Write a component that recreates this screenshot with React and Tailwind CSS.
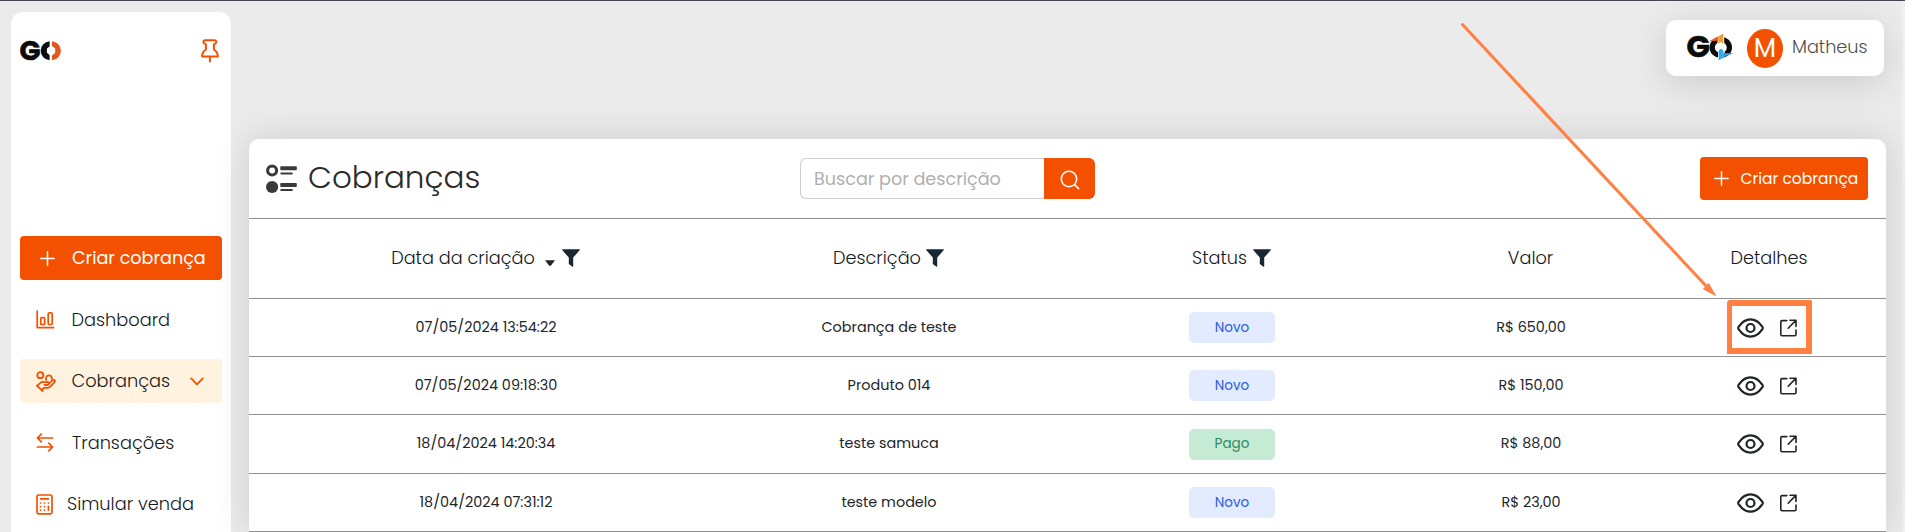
import React from "react";

const SANS = "font-['Poppins','Inter',sans-serif]";

function LogoSmall() {
  return (
    <svg width="42" height="22" viewBox="0 0 42 22" className="block overflow-visible">
      <text x="-0.6" y="19.6" fontFamily="Poppins, Inter, sans-serif" fontWeight="700" fontSize="26.5" textLength="21" lengthAdjust="spacingAndGlyphs" fill="#0b0b0b" stroke="#0b0b0b" strokeWidth="0.6">G</text>
      <path d="M29.6 1.2 A9.9 9.6 0 0 0 29.6 20.3 V15 L26.9 12.8 V8.6 L29.6 6.4 Z" fill="#0b0b0b" />
      <path d="M32 1.2 A9.9 9.6 0 0 1 32 20.3 V15.6 L35.2 12.8 V8.6 L32 5.9 Z" fill="#e4571b" />
    </svg>
  );
}

function LogoLarge() {
  return (
    <svg width="48" height="30" viewBox="0 0 48 30" className="block overflow-visible">
      <text x="-0.4" y="24.4" fontFamily="Poppins, Inter, sans-serif" fontWeight="700" fontSize="29" textLength="23.4" lengthAdjust="spacingAndGlyphs" fill="#0b0b0b" stroke="#0b0b0b" strokeWidth="0.6">G</text>
      <ellipse cx="33.8" cy="14.4" rx="8.6" ry="8" fill="none" stroke="#0b0b0b" strokeWidth="5.2" />
      <path d="M30.5 3 H37.2 V14 L33.8 11.5 L30.5 14 Z" fill="#fff" />
      <path d="M31 27 V17 L34 14.6 L37.6 17.5 V23 Z" fill="#fff" />
      <path d="M21.4 8.6 L31.4 3.2 V7.4 Z" fill="#f0592a" />
      <path d="M31.4 3.4 L36.2 0.6 V10.8 L34 9 L31.4 10.8 Z" fill="#f59a2c" />
      <path d="M31.6 27.6 V17.6 L33.8 15.8 L36.4 17.6 V24.6 Z" fill="#37a9e6" />
      <path d="M36.4 24.6 V20 H46.4 Z" fill="#2d95cf" />
    </svg>
  );
}

function PinIcon() {
  return (
    <svg width="18" height="24" viewBox="0 0 18 24" fill="none" stroke="#f35000" strokeWidth="2" strokeLinecap="round" strokeLinejoin="round" className="block">
      <path d="M4.2 1.2 H13.4 Q15.4 1.3 15.3 3 Q15.2 4.5 12.9 5.4 V10.6 Q16.8 12.9 16.8 17.4 H1.1 Q1.1 12.9 4.9 10.6 V5.4 Q2.5 4.5 2.4 3 Q2.4 1.3 4.2 1.2 Z M8.9 17.5 V22.6" />
    </svg>
  );
}

function Plus() {
  return (
    <svg width="15" height="15" viewBox="0 0 15 15" stroke="#fff" strokeWidth="1.5" strokeLinecap="round" className="block shrink-0">
      <path d="M7.5 0.8 V14.2 M0.8 7.5 H14.2" />
    </svg>
  );
}

function DashboardIcon() {
  return (
    <svg width="19" height="19" viewBox="0 0 19 19" fill="none" stroke="#f35000" strokeWidth="1.7" strokeLinecap="round" strokeLinejoin="round" className="block">
      <path d="M1.2 1 V17.7 H17.6" />
      <rect x="4.7" y="7.7" width="4" height="6.8" rx="1" />
      <rect x="12.2" y="2.9" width="4" height="11.6" rx="1" />
    </svg>
  );
}

function ChargesIcon() {
  return (
    <svg width="20" height="21" viewBox="0 0 20 21" fill="none" stroke="#f35000" strokeWidth="1.8" strokeLinecap="round" strokeLinejoin="round" className="block">
      <circle cx="4.3" cy="4.2" r="3" />
      <path d="M10.4 9 A3 3 0 1 1 15.8 8.2" />
      <path d="M1 14.8 L4.4 11.8 Q6.3 10.2 8.6 11.2 L12 11.2 Q13.4 11.8 12.6 13.4 Q12.2 14 11.2 14 H8.6" />
      <path d="M13 12.4 L16.5 9.4 Q18.2 8.4 18.9 9.6 Q19.2 10.4 18.3 11.4 L14.4 15.6 Q13.2 16.8 11.6 16.8 H8 L6.2 18.6" />
      <path d="M1 14.6 L6.5 20" />
    </svg>
  );
}

function TransfersIcon() {
  return (
    <svg width="18" height="19" viewBox="0 0 18 19" fill="none" stroke="#f35000" strokeWidth="1.7" strokeLinecap="round" strokeLinejoin="round" className="block">
      <path d="M16.6 5 H1.4 M5.3 1.2 L1.4 5 L5.3 8.8" />
      <path d="M1.4 14 H16.6 M12.7 10.2 L16.6 14 L12.7 17.8" />
    </svg>
  );
}

function CalculatorIcon() {
  return (
    <svg width="17" height="21" viewBox="0 0 17 21" fill="none" stroke="#f35000" strokeWidth="1.7" strokeLinecap="round" strokeLinejoin="round" className="block">
      <rect x="1" y="1" width="15" height="18.8" rx="1.6" />
      <path d="M4.6 4.9 H12.4" />
      <path d="M4.5 9 H4.6 M8.4 9 H8.5 M12.4 9 H12.5 M4.5 12.6 H4.6 M8.4 12.6 H8.5 M4.5 16.1 H4.6 M8.4 16.1 H8.5 M12.4 12.4 V16.1" />
    </svg>
  );
}

function Chevron() {
  return (
    <svg width="14" height="9" viewBox="0 0 14 9" fill="none" stroke="#f35000" strokeWidth="1.8" strokeLinecap="round" strokeLinejoin="round" className="block">
      <path d="M1.2 1.4 L7 7.4 L12.8 1.4" />
    </svg>
  );
}

function ListIcon() {
  return (
    <svg width="31" height="30" viewBox="0 0 31 30" fill="#3a3a3a" className="mt-px block shrink-0">
      <circle cx="6.1" cy="6.5" r="4.5" fill="none" stroke="#3a3a3a" strokeWidth="3.1" />
      <circle cx="6.1" cy="23" r="6.1" />
      <rect x="14.3" y="2.3" width="16.5" height="4" rx="0.8" />
      <rect x="14.3" y="8.4" width="12.5" height="2" rx="0.8" />
      <rect x="14.3" y="19" width="16.5" height="4" rx="0.8" />
      <rect x="14.3" y="25" width="12.5" height="2" rx="0.8" />
    </svg>
  );
}

function SearchIcon() {
  return (
    <svg width="20" height="20" viewBox="0 0 20 20" fill="none" stroke="#fff" strokeWidth="1.6" strokeLinecap="round" className="mt-0.5 block">
      <circle cx="9" cy="9" r="7.7" />
      <path d="M14.6 14.6 L18.6 18.6" />
    </svg>
  );
}

function Funnel() {
  return (
    <svg width="18" height="18" viewBox="0 0 18 18" fill="#172733" className="mt-px block shrink-0">
      <path d="M0.2 0.2 H17.8 V1 L11.2 8.6 V17.8 H10.4 L6.8 15 V8.6 L0.2 1 Z" />
    </svg>
  );
}

function Caret() {
  return (
    <svg width="10" height="6" viewBox="0 0 10 6" fill="#212529" className="mt-[10px] block shrink-0">
      <path d="M0 0.3 H10 L6.2 5.2 Q5 6.2 3.8 5.2 Z" />
    </svg>
  );
}

function Eye() {
  return (
    <svg width="27" height="20" viewBox="0 0 27 20" fill="none" stroke="#212529" strokeWidth="2.2" strokeLinejoin="round" className="block">
      <path d="M1.2 10 Q1.2 9.2 2 8.3 C4.8 4.2 8.8 1.3 13.5 1.3 C18.2 1.3 22.2 4.2 25 8.3 Q25.8 9.2 25.8 10 Q25.8 10.8 25 11.7 C22.2 15.8 18.2 18.7 13.5 18.7 C8.8 18.7 4.8 15.8 2 11.7 Q1.2 10.8 1.2 10 Z" />
      <circle cx="13.5" cy="10" r="4" />
    </svg>
  );
}

function OpenIcon() {
  return (
    <svg width="17" height="18" viewBox="0 0 17 18" fill="none" stroke="#212529" strokeWidth="1.6" strokeLinecap="round" strokeLinejoin="round" className="block">
      <path d="M6.8 1.6 H2 Q0.8 1.6 0.8 2.8 V15.6 Q0.8 16.8 2 16.8 H14.8 Q16 16.8 16 15.6 V11" />
      <path d="M10 1.2 H16 V7.4 M15.8 1.4 L8.2 9.2" />
    </svg>
  );
}

function NavItem({ icon, label, active, slot }) {
  return (
    <div className={`flex h-11 items-center rounded ${active ? "bg-[#fff2df]" : ""}`}>
      <div className={`flex shrink-0 items-center pl-4 ${slot}`}>{icon}</div>
      <span className="whitespace-nowrap pt-px text-[17.75px] font-light text-[#15191d]">{label}</span>
      {active && <span className="ml-auto mr-[18px]"><Chevron /></span>}
    </div>
  );
}

function Sidebar() {
  return (
    <aside className="ml-[11px] mt-[11px] flex w-[220px] shrink-0 flex-col overflow-hidden rounded-t-xl bg-white px-[9px]">
      <div className="flex h-[223px] shrink-0 items-start justify-between pr-[3px] pt-[27px]">
        <div className="mt-[1px]"><LogoSmall /></div>
        <PinIcon />
      </div>
      <button className="mt-px flex h-11 w-[202px] shrink-0 items-center rounded bg-[#f35000] pl-[19.5px] text-white">
        <Plus />
        <span className="ml-[17.5px] whitespace-nowrap text-[17.6px]">Criar cobrança</span>
      </button>
      <nav className="mt-[17.5px] flex w-[202px] shrink-0 flex-col gap-[17.6px]">
        <NavItem icon={<DashboardIcon />} label="Dashboard" slot="w-[51.5px]" />
        <NavItem icon={<ChargesIcon />} label="Cobranças" slot="w-[51.5px]" active />
        <NavItem icon={<TransfersIcon />} label="Transações" slot="w-[52px]" />
        <NavItem icon={<CalculatorIcon />} label="Simular venda" slot="w-[47px]" />
      </nav>
    </aside>
  );
}

function ProfileCard() {
  return (
    <div className="mr-[18px] mt-[19px] flex h-14 w-[218px] items-center self-end rounded-[10px] bg-white pl-[21px] shadow-[0_8px_36px_rgba(0,0,0,0.13)]">
      <LogoLarge />
      <div className="ml-3 flex h-[39px] w-9 items-center justify-center rounded-[50%] bg-[#f35000] text-[26px] text-white">M</div>
      <span className="-mt-0.5 ml-[9px] text-[17.7px] font-light text-[#505050]">Matheus</span>
    </div>
  );
}

const GRID = "grid grid-cols-[473px_333px_353px_245px_233px] items-center";

const rows = [
  { date: "07/05/2024 13:54:22", desc: "Cobrança de teste", status: "Novo", value: "R$ 650,00", h: "h-[58px]" },
  { date: "07/05/2024 09:18:30", desc: "Produto 014", status: "Novo", value: "R$ 150,00", h: "h-[58px]" },
  { date: "18/04/2024 14:20:34", desc: "teste samuca", status: "Pago", value: "R$ 88,00", h: "h-[59px]" },
  { date: "18/04/2024 07:31:12", desc: "teste modelo", status: "Novo", value: "R$ 23,00", h: "h-[58px]" },
];

function Badge({ status }) {
  const tone = status === "Pago" ? "bg-[#c5ebd5] text-[#2d8a60]" : "bg-[#e2ebff] text-[#2c5be0]";
  return <span className={`flex h-[31px] w-[86px] items-center justify-center rounded-[5px] pt-px text-[13.6px] ${tone}`}>{status}</span>;
}

function ChargesTable() {
  return (
    <div className="text-[#212529]">
      <div className={`${GRID} h-20 border-b border-[#8f8f8f] pb-px text-[17.7px] font-light text-[#15191d]`}>
        <div className="flex items-center justify-center">
          <span>Data da criação</span>
          <span className="ml-[10px]"><Caret /></span>
          <span className="ml-[7px]"><Funnel /></span>
        </div>
        <div className="flex items-center justify-center">
          <span>Descrição</span>
          <span className="ml-[5px]"><Funnel /></span>
        </div>
        <div className="flex items-center justify-center">
          <span>Status</span>
          <span className="ml-1.5"><Funnel /></span>
        </div>
        <div className="text-center">Valor</div>
        <div className="pr-px text-center">Detalhes</div>
      </div>
      {rows.map((r) => (
        <div key={r.date} className={`${GRID} ${r.h} border-b border-[#8f8f8f] text-center text-[14.4px]`}>
          <div className="pl-px">{r.date}</div>
          <div className="pl-px">{r.desc}</div>
          <div className="flex justify-center pl-px"><Badge status={r.status} /></div>
          <div className="pl-px">{r.value}</div>
          <div className="flex items-center pl-[83.5px]">
            <Eye />
            <span className="ml-4"><OpenIcon /></span>
          </div>
        </div>
      ))}
    </div>
  );
}

function ChargesPanel() {
  return (
    <section className="ml-[18px] mt-[63px] w-[1637px] flex-1 rounded-t-[10px] bg-white shadow-[0_0_36px_rgba(0,0,0,0.13)]">
      <div className="flex h-20 items-center border-b border-[#8f8f8f]">
        <div className="flex w-[551px] items-center pl-[17px]">
          <ListIcon />
          <h1 className="-mt-0.5 ml-[11px] text-[31px] font-light text-[#2a2a2a]">Cobranças</h1>
        </div>
        <div className="flex h-[41px] w-[295px]">
          <div className="flex flex-1 items-center rounded-l-md border border-r-0 border-[#cfcfcf] pl-[13px] pt-px text-[17.6px] text-[#b0b0b0]">Buscar por descrição</div>
          <button className="flex w-[51px] items-center justify-center rounded-r-md bg-[#f35000]"><SearchIcon /></button>
        </div>
        <button className="ml-auto mr-[18px] flex h-[43px] w-[168px] items-center rounded bg-[#f35000] pl-[13.5px] text-white">
          <Plus />
          <span className="ml-[12px] whitespace-nowrap text-[15.5px] font-normal">Criar cobrança</span>
        </button>
      </div>
      <ChargesTable />
    </section>
  );
}

function Highlight() {
  return (
    <svg width="400" height="360" viewBox="1450 0 400 360" fill="none" className="pointer-events-none absolute left-[1450px] top-0">
      <path d="M1462.5 24.5 L1707 287" stroke="#ff8040" strokeWidth="3" strokeLinecap="round" />
      <path d="M1715.5 295.5 L1703.5 289 L1708.5 283.5 Z" fill="#ff8040" stroke="#ff8040" strokeLinejoin="round" />
      <path d="M1727 302 L1729 300 H1811 L1812 301 V354 H1727 Z M1732 306 V348 H1806 V306 Z" fill="#ff8040" fillRule="evenodd" />
    </svg>
  );
}

export default function App() {
  return (
    <div className={`relative h-screen w-full overflow-hidden border-t border-[#45464f] bg-[#ebebeb] ${SANS}`}>
      <div className="flex h-full border-r-[3px] border-[#f1f1f1]">
        <Sidebar />
        <main className="flex flex-1 flex-col">
          <ProfileCard />
          <ChargesPanel />
        </main>
      </div>
      <div className="pointer-events-none absolute inset-x-0 -top-px"><Highlight /></div>
    </div>
  );
}
